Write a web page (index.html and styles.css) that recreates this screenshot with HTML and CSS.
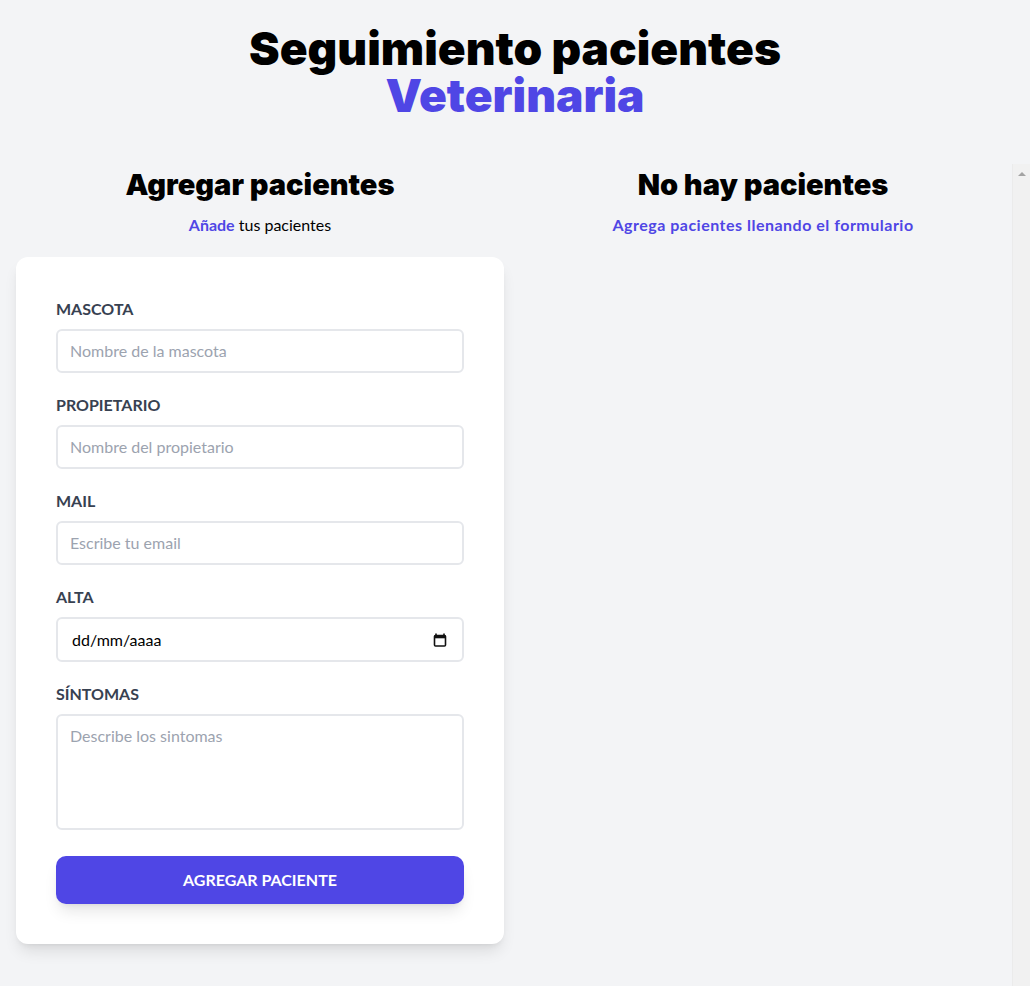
FILE: index.html
```
<!DOCTYPE html>
<html lang="es">
<head>
<meta charset="utf-8">
<title>Seguimiento pacientes Veterinaria</title>
<link rel="stylesheet" href="styles.css">
</head>
<body>
<div class="page">
  <h1 class="title">Seguimiento pacientes <span class="accent">Veterinaria</span></h1>
  <main class="columns">
    <section class="col-form">
      <h2 class="col-title">Agregar pacientes</h2>
      <p class="col-sub"><span class="accent strong">Añade</span> tus pacientes</p>
      <form class="card">
        <div class="field">
          <label class="label" for="mascota">Mascota</label>
          <input class="input" id="mascota" type="text" placeholder="Nombre de la mascota">
        </div>
        <div class="field">
          <label class="label" for="propietario">Propietario</label>
          <input class="input" id="propietario" type="text" placeholder="Nombre del propietario">
        </div>
        <div class="field">
          <label class="label" for="email">Mail</label>
          <input class="input" id="email" type="email" placeholder="Escribe tu email">
        </div>
        <div class="field">
          <label class="label" for="alta">Alta</label>
          <div class="date-wrap">
            <input class="input input-date" id="alta" type="text" placeholder="dd/mm/aaaa">
            <svg class="cal-icon" width="14" height="14" viewBox="0 0 14 14" aria-hidden="true">
              <path d="M3 0.5v2M11 0.5v2" stroke="#111" stroke-width="1.6" fill="none"/>
              <rect x="1.5" y="2.5" width="11" height="10.5" rx="1" fill="none" stroke="#111" stroke-width="1.6"/>
              <rect x="1.5" y="2.5" width="11" height="2.8" fill="#111"/>
            </svg>
          </div>
        </div>
        <div class="field field-last">
          <label class="label" for="sintomas">Síntomas</label>
          <textarea class="input textarea" id="sintomas" placeholder="Describe los sintomas"></textarea>
        </div>
        <button class="submit" type="button">Agregar paciente</button>
      </form>
    </section>
    <section class="col-list">
      <h2 class="col-title">No hay pacientes</h2>
      <p class="col-sub accent strong wide">Agrega pacientes llenando el formulario</p>
    </section>
    <div class="scroll-track" aria-hidden="true"><span class="scroll-arrow"></span></div>
  </main>
</div>
</body>
</html>
```
FILE: styles.css
```
* { box-sizing: border-box; }
html, body { margin: 0; height: 100%; overflow: hidden; }
body {
  background: #f3f4f6;
  font-family: Lato, "Noto Sans", sans-serif;
  color: #000;
  font-size: 16px;
  line-height: 24px;
}
.page { display: flex; flex-direction: column; height: 100%; }
.title {
  margin: 25px auto 0;
  font-family: Inter, Roboto, sans-serif;
  font-size: 46px;
  line-height: 47px;
  font-weight: 900;
  text-align: center;
  width: 620px;
}
.accent { color: #4f46e5; }
.strong { font-weight: 700; }
.wide { letter-spacing: 0.5px; }
.columns {
  margin-top: 48px;
  display: flex;
  flex: 1;
  min-height: 0;
}
.col-form { width: 520px; padding: 0 16px; flex-shrink: 0; }
.col-list { flex: 1; padding-right: 6px; }
.scroll-track {
  width: 18px;
  flex-shrink: 0;
  margin-top: -3px;
  background: #f1f1f1;
  border-left: 1px solid #ebebeb;
  display: flex;
  justify-content: center;
  padding-top: 8px;
}
.scroll-arrow {
  width: 0;
  height: 0;
  border-left: 4px solid transparent;
  border-right: 4px solid transparent;
  border-bottom: 4px solid #a3a3a3;
}
.col-title {
  margin: 0;
  font-family: Inter, Roboto, sans-serif;
  font-size: 29px;
  line-height: 36px;
  font-weight: 900;
  text-align: center;
}
.col-sub {
  margin: 10px 0 0;
  text-align: center;
  font-size: 16px;
  line-height: 24px;
}
.card {
  margin-top: 20px;
  background: #fff;
  border-radius: 12px;
  padding: 40px;
  box-shadow: 0 10px 15px -3px rgba(0,0,0,.1), 0 4px 6px -4px rgba(0,0,0,.1);
}
.field { margin-bottom: 20px; }
.field-last { margin-bottom: 26px; }
.label {
  display: block;
  text-transform: uppercase;
  font-weight: 700;
  color: #374151;
  margin-bottom: 8px;
}
.input {
  display: block;
  width: 100%;
  border: 2px solid #e5e7eb;
  border-radius: 6px;
  padding: 8px 12px;
  font: inherit;
  font-size: 16px;
  line-height: 24px;
  color: #111;
  background: #fff;
  outline: none;
}
.input::placeholder { color: #9ca3af; }
.date-wrap { position: relative; }
.input-date { padding: 9px 12px 8px 14px; }
.input-date::placeholder { color: #000; }
.cal-icon { position: absolute; right: 17px; top: 16px; }
.textarea { height: 116px; resize: none; }
.submit {
  display: block;
  width: 100%;
  border: 0;
  border-radius: 10px;
  background: #4f46e5;
  color: #fff;
  font: inherit;
  font-weight: 700;
  text-transform: uppercase;
  padding: 12px;
  line-height: 24px;
  box-shadow: 0 10px 15px -3px rgba(0,0,0,.1), 0 4px 6px -4px rgba(0,0,0,.1);
}
```
